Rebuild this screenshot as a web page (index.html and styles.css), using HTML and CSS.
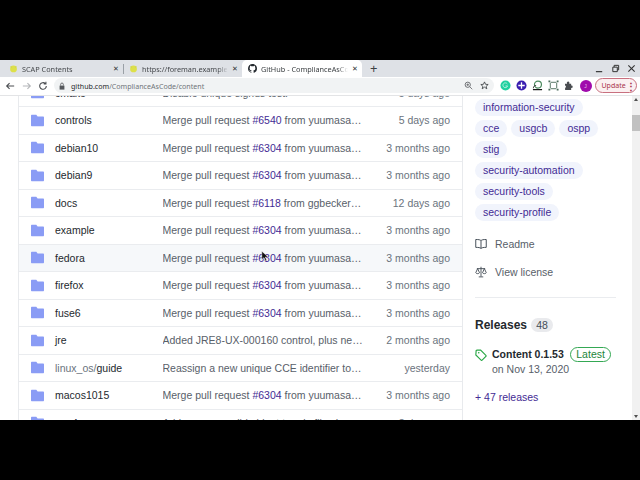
FILE: index.html
```html
<!DOCTYPE html>
<html lang="en">
<head>
<meta charset="utf-8">
<title>GitHub - ComplianceAsCode/content</title>
<link rel="stylesheet" href="styles.css">
</head>
<body>
<svg class="defs" width="0" height="0" aria-hidden="true">
  <symbol id="folder" viewBox="0 0 16 16"><path d="M1.2 1h4.600c.5 0 .9.2 1.200.6l.9 1.200c.2.2.4.3.7.3h6.200c.7 0 1.200.5 1.200 1.200v9.400c0 .7-.5 1.300-1.200 1.300H1.200C.5 15 0 14.500 0 13.700V2.300C0 1.500.5 1 1.200 1z"/></symbol>
  <symbol id="lime" viewBox="0 0 12 12"><circle cx="6" cy="6.500" r="4.500" fill="#dde04a"/><path d="M2 3.500l2 1M10 3.500l-2 1" stroke="#c7cf5a" stroke-width="1.200"/></symbol>
</svg>
<div class="browser">
  <div class="tabbar">
    <div class="tab">
      <svg class="favicon"><use href="#lime"/></svg>
      <span class="tab-title">SCAP Contents</span>
      <span class="tab-close">✕</span>
    </div>
    <div class="tab tab-sep">
      <svg class="favicon"><use href="#lime"/></svg>
      <span class="tab-title">https://foreman.example.com</span>
      <span class="tab-close">✕</span>
    </div>
    <div class="tab tab-active">
      <svg class="favicon" viewBox="0 0 16 16"><path fill="#24292e" d="M8 0C3.600 0 0 3.600 0 8c0 3.500 2.300 6.500 5.500 7.600.4.100.5-.2.500-.4v-1.400c-2.200.5-2.700-1-2.700-1-.4-.9-.9-1.200-.9-1.200-.7-.5.100-.5.100-.5.800.100 1.200.8 1.200.8.700 1.200 1.900.9 2.300.7.100-.5.300-.9.500-1.100-1.800-.2-3.600-.9-3.600-4 0-.9.300-1.600.8-2.100-.1-.2-.4-1 .1-2.100 0 0 .7-.2 2.200.8a7.600 7.600 0 0 1 4 0c1.500-1 2.200-.8 2.200-.8.400 1.100.2 1.900.1 2.100.5.600.8 1.300.8 2.100 0 3.100-1.900 3.700-3.700 3.900.3.300.6.700.6 1.500v2.200c0 .2.100.5.600.4A8 8 0 0 0 16 8c0-4.400-3.600-8-8-8z"/></svg>
      <span class="tab-title">GitHub - ComplianceAsCode/content</span>
      <span class="tab-close">✕</span>
    </div>
    <span class="new-tab">+</span>
    <div class="win-controls">
      <svg viewBox="0 0 10 10"><path d="M1 8.500h7" stroke="#333" stroke-width="1.300"/></svg>
      <svg viewBox="0 0 10 10"><path d="M2 3.500h5v5H2zM3.500 3.500V1.500h5v5H7" fill="none" stroke="#333" stroke-width="1.100"/></svg>
      <svg viewBox="0 0 10 10"><path d="M1.500 1.500l7 7M8.500 1.500l-7 7" stroke="#333" stroke-width="1.200"/></svg>
    </div>
  </div>
  <div class="toolbar">
    <div class="nav">
      <svg viewBox="0 0 12 12"><path d="M11 6H2M5.500 2.500L2 6l3.500 3.500" fill="none" stroke="#4a4d51" stroke-width="1.300"/></svg>
      <svg viewBox="0 0 12 12"><path d="M1 6h9M6.500 2.500L10 6 6.500 9.500" fill="none" stroke="#b4b6b9" stroke-width="1.300"/></svg>
      <svg viewBox="0 0 12 12"><path d="M10 6a4 4 0 1 1-1.200-2.900M9.500 1v2.600H6.900" fill="none" stroke="#4a4d51" stroke-width="1.300"/></svg>
    </div>
    <div class="omnibox">
      <svg class="lock" viewBox="0 0 10 10"><path d="M2 4.500h6v5H2z" fill="#55585c"/><path d="M3.300 4.500V3a1.700 1.700 0 0 1 3.400 0v1.500" fill="none" stroke="#55585c" stroke-width="1"/></svg>
      <span class="url"><b>github.com</b>/ComplianceAsCode/content</span>
      <svg class="omni-icon" viewBox="0 0 12 12"><circle cx="5" cy="5" r="3.500" fill="none" stroke="#55585c" stroke-width="1.100"/><path d="M7.700 7.700L11 11M3.300 5h3.400M5 3.300v3.400" stroke="#55585c" stroke-width="1"/></svg>
      <svg class="omni-icon" viewBox="0 0 12 12"><path d="M6 1.200l1.400 3.200 3.500.3-2.700 2.300.9 3.400L6 8.200l-3.100 2.200.9-3.400L1.100 4.700l3.500-.3z" fill="none" stroke="#3c4043" stroke-width="1.100"/></svg>
    </div>
    <div class="extensions">
      <svg viewBox="0 0 12 12"><circle cx="6" cy="6" r="5.500" fill="#1fd0a0"/><path d="M8 4.300a2.600 2.600 0 1 0 .3 2.200H6" fill="none" stroke="#bff3e3" stroke-width="1"/></svg>
      <svg viewBox="0 0 12 12"><circle cx="6" cy="6" r="5.500" fill="#3a1fb0"/><path d="M6 2.500v7M2.500 6h7" stroke="#fff" stroke-width="1.400"/></svg>
      <svg viewBox="0 0 12 12"><path d="M1 10.500h10" stroke="#111" stroke-width="1.300"/><circle cx="6.500" cy="5" r="3.800" fill="none" stroke="#4b8a5e" stroke-width="1.300"/><path d="M1.500 9c0-2 1-3 3-3" fill="none" stroke="#333" stroke-width="1"/></svg>
      <svg viewBox="0 0 12 12"><path d="M3 2.500h6M3 9.500h6M2.500 3v6M9.500 3v6" stroke="#4a6b5a" stroke-width="1"/><path d="M.5.500h2v2h-2zM9.500.500h2v2h-2zM.5 9.500h2v2h-2zM9.500 9.500h2v2h-2z" fill="#4a6b5a"/></svg>
      <svg viewBox="0 0 12 12"><path fill="#4a4d51" d="M1 4h2.300a1.300 1.300 0 0 1 2.500-1.500V4h2v2a1.300 1.300 0 1 1 0 2.500V11H1.200V8.500a1.300 1.300 0 0 0 0-2.500z"/></svg>
      <span class="avatar">J</span>
      <span class="update">Update <span class="update-dots">⋮</span></span>
    </div>
  </div>
  <div class="viewport">
    <div class="page">
      <div class="file-list">
        <div class="row"><svg class="folder"><use href="#folder"/></svg><span class="name">cmake</span><span class="msg">Disable unique sigrids test.</span><span class="age">5 days ago</span></div>
        <div class="row"><svg class="folder"><use href="#folder"/></svg><span class="name">controls</span><span class="msg">Merge pull request <a>#6540</a> from yuumasato/some-branch</span><span class="age">5 days ago</span></div>
        <div class="row"><svg class="folder"><use href="#folder"/></svg><span class="name">debian10</span><span class="msg">Merge pull request <a>#6304</a> from yuumasato/some-branch</span><span class="age">3 months ago</span></div>
        <div class="row"><svg class="folder"><use href="#folder"/></svg><span class="name">debian9</span><span class="msg">Merge pull request <a>#6304</a> from yuumasato/some-branch</span><span class="age">3 months ago</span></div>
        <div class="row"><svg class="folder"><use href="#folder"/></svg><span class="name">docs</span><span class="msg">Merge pull request <a>#6118</a> from ggbecker/some-branch</span><span class="age">12 days ago</span></div>
        <div class="row"><svg class="folder"><use href="#folder"/></svg><span class="name">example</span><span class="msg">Merge pull request <a>#6304</a> from yuumasato/some-branch</span><span class="age">3 months ago</span></div>
        <div class="row row-hover"><svg class="folder"><use href="#folder"/></svg><span class="name">fedora</span><span class="msg">Merge pull request <a>#6304</a> from yuumasato/some-branch</span><span class="age">3 months ago</span></div>
        <div class="row"><svg class="folder"><use href="#folder"/></svg><span class="name">firefox</span><span class="msg">Merge pull request <a>#6304</a> from yuumasato/some-branch</span><span class="age">3 months ago</span></div>
        <div class="row"><svg class="folder"><use href="#folder"/></svg><span class="name">fuse6</span><span class="msg">Merge pull request <a>#6304</a> from yuumasato/some-branch</span><span class="age">3 months ago</span></div>
        <div class="row"><svg class="folder"><use href="#folder"/></svg><span class="name">jre</span><span class="msg">Added JRE8-UX-000160 control, plus new rule for it</span><span class="age">2 months ago</span></div>
        <div class="row"><svg class="folder"><use href="#folder"/></svg><span class="name"><span class="name-dim">linux_os/</span>guide</span><span class="msg">Reassign a new unique CCE identifier to the rule</span><span class="age">yesterday</span></div>
        <div class="row"><svg class="folder"><use href="#folder"/></svg><span class="name">macos1015</span><span class="msg">Merge pull request <a>#6304</a> from yuumasato/some-branch</span><span class="age">3 months ago</span></div>
        <div class="row"><svg class="folder"><use href="#folder"/></svg><span class="name">ocp4</span><span class="msg">Add a new possible ident to rule files here now</span><span class="age">3 days ago</span></div>
      </div>
      <aside class="sidebar">
        <div class="topics">
          <a class="pill">information-security</a>
          <a class="pill">cce</a>
          <a class="pill">usgcb</a>
          <a class="pill">ospp</a>
          <a class="pill">stig</a>
          <a class="pill">security-automation</a>
          <a class="pill">security-tools</a>
          <a class="pill">security-profile</a>
        </div>
        <div class="meta-link">
          <svg viewBox="0 0 16 16"><path d="M8 3.500C6.800 2.300 5 2 1 2v10.500c4 0 5.800.3 7 1.500 1.200-1.200 3-1.500 7-1.500V2c-4 0-5.800.3-7 1.500zM8 3.500V14" fill="none" stroke="#444d56" stroke-width="1.300"/></svg>
          <span>Readme</span>
        </div>
        <div class="meta-link">
          <svg viewBox="0 0 16 16"><path d="M8 1v13M5 14.500h6M2.500 3.500h11M3.500 3.500L1 9c.5 1.600 4.500 1.600 5 0L3.500 3.500zM12.500 3.500L10 9c.5 1.600 4.500 1.600 5 0l-2.500-5.500z" fill="none" stroke="#444d56" stroke-width="1.200"/></svg>
          <span>View license</span>
        </div>
        <hr class="divider">
        <h2 class="releases-title">Releases <span class="count">48</span></h2>
        <div class="release">
          <svg class="tag" viewBox="0 0 16 16"><path d="M1.500 2.500a1 1 0 0 1 1-1h5l7 7a1 1 0 0 1 0 1.400l-5 5a1 1 0 0 1-1.400 0l-7-7z" fill="none" stroke="#28a745" stroke-width="1.500"/><circle cx="5" cy="5" r="1.100" fill="#28a745"/></svg>
          <div class="release-text">
            <div class="release-line"><b>Content 0.1.53</b><span class="latest">Latest</span></div>
            <div class="release-date">on Nov 13, 2020</div>
          </div>
        </div>
        <a class="more">+ 47 releases</a>
      </aside>
    </div>
    <div class="scrollbar">
      <span class="arrow-up"></span>
      <span class="thumb"></span>
      <span class="arrow-down"></span>
    </div>
    <svg class="cursor" viewBox="0 0 10 14"><path d="M1 1v10.500l2.700-2.400 1.800 4 1.700-.8-1.800-3.900H9z" fill="#111" stroke="#fff" stroke-width=".6"/></svg>
  </div>
</div>
</body>
</html>
```

FILE: styles.css
```css
* { box-sizing: border-box; }
html, body { margin: 0; height: 100%; background: #000; overflow: hidden; }
body { padding-top: 60px; font-family: "Liberation Sans", Arial, sans-serif; font-size: 10.500px; color: #24292e; }
.defs { position: absolute; }
.browser { height: 360px; display: flex; flex-direction: column; background: #fff; }

.tabbar { height: 17px; flex: none; background: #dee1e6; display: flex; align-items: center; font-family: "Noto Sans", "Open Sans", sans-serif; font-size: 7.300px; color: #45484c; }
.tab { width: 123px; height: 17px; display: flex; align-items: center; padding: 0 2.500px 0 9px; white-space: nowrap; flex: none; }
.tab-sep { width: 119px; padding-left: 6px; position: relative; }
.tab-sep::before { content: ""; position: absolute; left: 0; top: 4px; height: 10px; border-left: 1px solid #9aa0a6; }
.tab-active { width: 120px; background: #fff; border-radius: 5px 5px 0 0; color: #3c4043; padding-left: 6px; }
.favicon { width: 9px; height: 9px; flex: none; margin-right: 4px; }
.tab-title { flex: 1; min-width: 0; overflow: hidden; white-space: nowrap; -webkit-mask-image: linear-gradient(90deg, #000 88%, transparent); mask-image: linear-gradient(90deg, #000 88%, transparent); }
.tab-close { flex: none; width: 9px; font-size: 7px; text-align: center; color: #333; margin-left: 3px; }
.new-tab { margin-left: 8px; font-size: 13px; line-height: 1; color: #3c4043; }
.win-controls { margin-left: auto; display: flex; gap: 7px; padding-right: 4px; }
.win-controls svg { width: 9px; height: 9px; }

.toolbar { height: 19px; flex: none; background: #fff; display: flex; align-items: center; border-bottom: 1px solid #e3e4e6; padding: 0 0 1px 5px; }
.nav { display: flex; gap: 6.500px; flex: none; }
.nav svg { width: 10px; height: 10px; }
.omnibox { width: 440px; height: 15px; margin-left: 6px; background: #f1f3f4; border-radius: 8px; display: flex; align-items: center; padding: 0 5px 0 4px; flex: none; }
.lock { width: 8px; height: 8px; flex: none; }
.url { flex: 1; margin-left: 5px; font-family: "Noto Sans", "Open Sans", sans-serif; font-size: 7.100px; color: #70757a; white-space: nowrap; }
.url b { font-weight: 400; color: #26282b; }
.omni-icon { width: 9px; height: 9px; margin-left: 7px; flex: none; }
.extensions { display: flex; align-items: center; gap: 5px; margin-left: 5.500px; flex: none; }
.extensions svg { width: 11px; height: 11px; flex: none; }
.avatar { width: 12px; height: 12px; flex: none; border-radius: 50%; background: #a00bac; color: #e9c4ec; font-size: 5px; display: flex; align-items: center; justify-content: center; }
.update { width: 42px; height: 15px; flex: none; margin-left: -2px; border: 1px solid #c8707f; border-radius: 8px; background: #fbf0f1; color: #a8324a; font-family: "Noto Sans", sans-serif; font-size: 7px; display: flex; align-items: center; justify-content: space-between; padding: 0 2px 0 6px; }
.update-dots { font-size: 10px; font-weight: 700; }

.viewport { flex: 1; display: flex; position: relative; overflow: hidden; }
.page { flex: 1; overflow: hidden; display: flex; align-items: flex-start; padding-left: 18px; }
.file-list { width: 445px; flex: none; margin-top: -16.400px; border: 1px solid #e8eaed; border-width: 0 1px; }
.row { height: 27.500px; display: flex; align-items: center; border-bottom: 1px solid #eaecef; padding: 0 12px; }
.row-hover { background: #f6f8fa; }
.folder { width: 13px; height: 13px; fill: #8a9cf5; flex: none; margin-right: 11px; }
.name { width: 107.500px; flex: none; color: #24292e; white-space: nowrap; }
.name-dim { color: #6a737d; }
.msg { width: 201.500px; flex: none; color: #586069; white-space: nowrap; overflow: hidden; text-overflow: ellipsis; }
.msg a { color: #432b94; }
.age { flex: 1; text-align: right; color: #6a737d; white-space: nowrap; }

.sidebar { width: 141px; flex: none; margin-left: 12px; padding-top: 3px; }
.topics { display: flex; flex-wrap: wrap; gap: 4px; }
.pill { height: 17px; line-height: 17px; padding: 0 8px; border-radius: 9px; background: #f1f4fc; color: #432b94; white-space: nowrap; }
.meta-link { display: flex; align-items: center; gap: 8px; height: 14px; color: #586069; margin-top: 13.500px; }
.topics + .meta-link { margin-top: 16px; }
.meta-link svg { width: 12px; height: 12px; flex: none; }
.divider { border: 0; border-top: 1px solid #eaecef; margin: 18px 0 0; }
.releases-title { margin: 19px 0 0; font-size: 12px; line-height: 16px; font-weight: 700; color: #24292e; display: flex; align-items: center; gap: 4px; }
.count { width: 22px; height: 14px; border-radius: 7px; background: #e9eaed; font-size: 10.500px; font-weight: 400; line-height: 14px; text-align: center; color: #444d56; }
.release { display: flex; gap: 5px; margin-top: 13px; }
.tag { width: 12px; height: 12px; flex: none; margin-top: 3px; }
.release-text { min-width: 0; }
.release-line { display: flex; align-items: center; gap: 6px; height: 16px; white-space: nowrap; padding-top: 1px; }
.release-line b { color: #24292e; }
.latest { height: 15px; line-height: 13px; padding: 0 5.500px; border: 1px solid #34a853; border-radius: 8px; color: #22863a; }
.release-date { color: #586069; line-height: 14px; }
.more { display: block; margin-top: 15px; color: #432b94; }

.scrollbar { width: 8px; flex: none; background: #f1f1f1; position: relative; }
.thumb { position: absolute; left: 0; top: 19px; width: 8px; height: 16px; background: #c1c1c1; }
.arrow-up, .arrow-down { position: absolute; left: 2px; width: 0; height: 0; border: 2px solid transparent; }
.arrow-up { top: 2px; border-bottom: 3px solid #505050; border-top: 0; }
.arrow-down { bottom: 2px; border-top: 3px solid #505050; border-bottom: 0; }
.cursor { position: absolute; left: 261px; top: 154px; width: 8px; height: 12px; }
```
